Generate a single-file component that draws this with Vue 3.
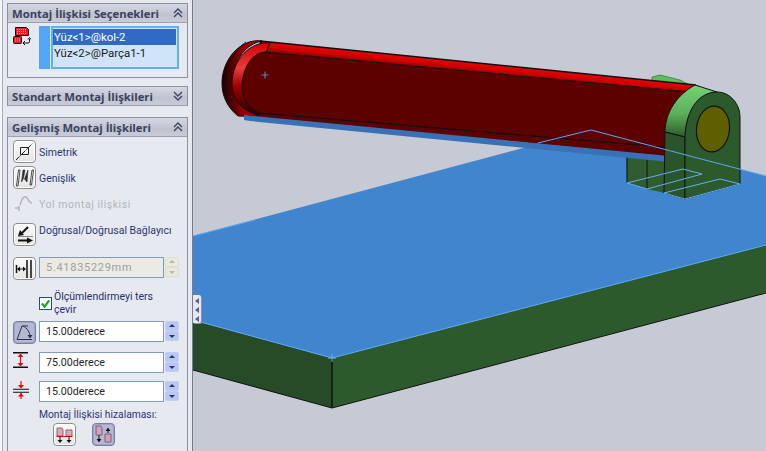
<template>
  <div class="app">
    <aside class="panel">
      <section class="group first">
        <header class="head">
          <span>Montaj İlişkisi Seçenekleri</span>
          <svg class="chev" viewBox="0 0 12 12"><path d="M2 6 6 2l4 4M2 10l4-4 4 4" /></svg>
        </header>
        <div class="sel-body">
          <svg class="sel-icon" viewBox="0 0 18 18">
            <path d="M2.500 .5h11l2 2v6h-13z" fill="#ee1c25" stroke="#111" />
            <path d="M4 2.500h10M4 4.500h10M4 6.500h10" stroke="#f8a0a0" stroke-dasharray="1 1" />
            <rect x=".5" y="9.500" width="8" height="7" rx="1" fill="#ee1c25" stroke="#111" />
            <path d="M2 12h5M2 14h5" stroke="#f8a0a0" stroke-dasharray="1 1" />
            <path d="M10 16h5a1.500 1.500 0 0 0 1.500-1.500V12M15 12.500l1.500-2 1.500 2M12 14l-2 2 2 2" fill="none" stroke="#111" />
          </svg>
          <div class="sel-swatch"></div>
          <div class="sel-list">
            <div class="sel-item on">Yüz&lt;1&gt;@kol-2</div>
            <div class="sel-item">Yüz&lt;2&gt;@Parça1-1</div>
          </div>
        </div>
      </section>

      <section class="group second">
        <header class="head">
          <span>Standart Montaj İlişkileri</span>
          <svg class="chev" viewBox="0 0 12 12"><path d="M2 2l4 4 4-4M2 6l4 4 4-4" /></svg>
        </header>
      </section>

      <section class="group third">
        <header class="head">
          <span>Gelişmiş Montaj İlişkileri</span>
          <svg class="chev" viewBox="0 0 12 12"><path d="M2 6 6 2l4 4M2 10l4-4 4 4" /></svg>
        </header>
        <div class="adv">
          <div class="tool">
            <button class="btn">
              <svg viewBox="0 0 21 21"><path d="M6.500 6.500h8v7h-8z" fill="none" stroke="#222" /><path d="M2 19 19 2" stroke="#222" stroke-dasharray="5 1 1 1" /></svg>
            </button>
            <span class="label">Simetrik</span>
          </div>
          <div class="tool gap-after">
            <button class="btn">
              <svg viewBox="0 0 21 21"><path d="M2.500 19 4.500 3h1.500L4 19zM16 18l2-15h1.500L17.500 18z" fill="#fff" stroke="#222" stroke-width=".8" /><path d="M7.500 15 9 3h2l-1.500 8zM13 15l1-12-3.500 9z" fill="#333" stroke="#222" stroke-width=".6" /></svg>
            </button>
            <span class="label">Genişlik</span>
          </div>
          <div class="tool path-row">
            <svg class="path-icon" viewBox="0 0 20 16"><path d="M1 12h4v-2M5 15v-5M6 9C8 2 10 0 12 1c2 1 3 6 6 6" fill="none" stroke="#b4b4b4" stroke-width="1.500" /></svg>
            <span class="label off">Yol montaj ilişkisi</span>
          </div>
          <div class="tool link-row">
            <button class="btn">
              <svg viewBox="0 0 21 21"><path d="M14 3 8 9" stroke="#111" stroke-width="2" /><path d="M4 12 6 6l4 5z" fill="#111" /><path d="M4 12.500h15" stroke="#888" /><path d="M4 16.500h11" stroke="#111" stroke-width="2" /><path d="M13 13.500l6 3-6 3z" fill="#111" /></svg>
            </button>
            <span class="label link-label">Doğrusal/Doğrusal Bağlayıcı</span>
          </div>

          <div class="field-row dist">
            <button class="btn">
              <svg viewBox="0 0 21 21"><path d="M2.500 7v8M13 2v18M17 2v18" stroke="#111" stroke-width="1.500" /><path d="M4 11h7" stroke="#111" /><path d="M3 11l3-2.500v5zM12 11l-3-2.500v5z" fill="#111" /></svg>
            </button>
            <div class="input disabled">5.41835229mm</div>
            <div class="spin disabled"><i class="up"></i><i class="down"></i></div>
          </div>

          <label class="check">
            <span class="box">
              <svg viewBox="0 0 12 12"><path d="M2 6l3 3.500L10 2.500" fill="none" stroke="#1ea32d" stroke-width="2.400" /></svg>
            </span>
            <span>Ölçümlendirmeyi ters çevir</span>
          </label>

          <div class="field-row angle">
            <button class="btn active">
              <svg viewBox="0 0 21 21"><path d="M3 17.500h15M3 17.500 8 4h6" stroke="#333" fill="none" /><path d="M9 4c4 2 7 6 7 11" stroke="#333" fill="none" /><path d="M13.500 13h5l-2.500 3.500z" fill="#333" /></svg>
            </button>
            <div class="input">15.00derece</div>
            <div class="spin"><i class="up"></i><i class="down"></i></div>
          </div>
          <div class="field-row">
            <svg class="red-icon" viewBox="0 0 16 16">
              <path d="M0 .75h15M0 15.250h15" stroke="#111" stroke-width="1.400" />
              <path d="M7.500 2v12" stroke="#f00015" stroke-width="1.200" />
              <path d="M4.500 5l3-3.500 3 3.500zM4.500 11l3 3.500 3-3.500z" fill="#f00015" />
            </svg>
            <div class="input">75.00derece</div>
            <div class="spin"><i class="up"></i><i class="down"></i></div>
          </div>
          <div class="field-row last">
            <svg class="red-icon tall" viewBox="0 0 16 18">
              <path d="M0 8.250h16M0 11.250h16" stroke="#111" stroke-width="1.200" />
              <path d="M8 0v7M8 12v6" stroke="#f00015" stroke-width="1.200" />
              <path d="M5 4l3 3.500L11 4zM5 15.500l3-3.500 3 3.500z" fill="#f00015" />
            </svg>
            <div class="input">15.00derece</div>
            <div class="spin"><i class="up"></i><i class="down"></i></div>
          </div>

          <div class="align-title">Montaj İlişkisi hizalaması:</div>
          <div class="align-row">
            <button class="btn">
              <svg viewBox="0 0 21 21"><path d="M3 4h5l1 2v6H3zM12 6h6v6h-6z" fill="#e0a8b8" stroke="#8a6878" /><path d="M2.500 12.500h16" stroke="#e00" /><path d="M6 12v6M15 12v6" stroke="#111" /><path d="M3.500 16h5L6 19zM12.500 16h5L15 19z" fill="#111" /></svg>
            </button>
            <button class="btn active">
              <svg viewBox="0 0 21 21"><path d="M3 2h5l1 2v7H3zM12 10h6v8h-6z" fill="#d8a0b8" stroke="#7a6080" /><path d="M6 11v7M15 9V4" stroke="#111" /><path d="M3.500 15h5L6 18zM12.500 7h5L15 4z" fill="#111" /></svg>
            </button>
          </div>
        </div>
      </section>
    </aside>

    <main class="viewport">
      <svg class="scene" viewBox="193 0 573 451">
        <defs>
          <linearGradient id="barTop" gradientUnits="userSpaceOnUse" x1="480" y1="63.500" x2="479" y2="73.500">
            <stop offset="0" stop-color="#ec0000" />
            <stop offset=".55" stop-color="#cc0000" />
            <stop offset="1" stop-color="#7c0000" />
          </linearGradient>
          <linearGradient id="capShade" x1="0" y1="0" x2="1" y2="0">
            <stop offset="0" stop-color="#1c0000" />
            <stop offset=".5" stop-color="#900000" />
            <stop offset="1" stop-color="#c80000" />
          </linearGradient>
          <linearGradient id="capLip" x1="0" y1="0" x2="0" y2="1">
            <stop offset="0" stop-color="#d80000" />
            <stop offset=".35" stop-color="#e83c3c" />
            <stop offset=".6" stop-color="#a00000" />
            <stop offset="1" stop-color="#200000" />
          </linearGradient>
          <linearGradient id="lugTop" x1="0" y1="0" x2="0" y2="1">
            <stop offset="0" stop-color="#74d274" />
            <stop offset=".55" stop-color="#5cb05c" />
            <stop offset="1" stop-color="#2b5c2b" />
          </linearGradient>
        </defs>

        <!-- plate -->
        <path d="M193 320 332 358v50L193 370z" fill="#264b26" />
        <path d="M332 358 766 245v48L332 408z" fill="#2d5a2d" />
        <path d="M193 370 332 408 766 293" fill="none" stroke="#111" />
        <path d="M332 358v50" stroke="#111" stroke-width="1.500" />
        <path d="M193 236 591 130 766 176v69L332 358 193 320z" fill="#4285cf" />

        <!-- lugs -->
        <path d="M652 77l8-2 20 5 10 5-38-4z" fill="#5cbf5c" stroke="#2d5a2d" stroke-width=".6" />
        <path d="M626 150h39v43l-18-4-20-6z" fill="#305c30" />
        <path d="M647 158v31M627 150v33" stroke="#111" />

        <!-- red bar -->
        <path d="M260 41 700 86 668 156 238 116z" fill="#5c0000" />
        <path d="M262 41 696 85 683 92 265 52z" fill="url(#barTop)" />
        <path d="M260 41 696 85" fill="none" stroke="#111" stroke-width="1.300" />
        <path d="M260 113 665 147M244 118 668 156" fill="none" stroke="#111" />
        <path d="M262 41C240 38 222 60 222 83 222 97 228 108 238 116L258 116C240 100 234 88 234 76 234 60 246 44 262 41z" fill="url(#capShade)" stroke="#111" />
        <path d="M246 42C234 50 226 66 226 84 226 96 230 106 238 114" fill="none" stroke="#111" stroke-width=".8" />
        <path d="M270 43C250 41 232 60 232 84 232 98 240 110 258 115L262 113 266 52 270 43z" fill="url(#capLip)" stroke="#111" />
        <path d="M265 52 690 92 665 147 260 113C250 110 242 100 242 87 242 72 250 53 265 52z" fill="#5c0000" stroke="#111" />
        <path d="M261.500 75h7M265 71.500v7" stroke="#5a8fc0" />
        <path d="M244 115 680 157v6L250 121l-6-1z" fill="#3a70b5" />

        <!-- clevis -->
        <path d="M665 132C665 112 678 94 695 85L717 92C698 94 686 115 685 137z" fill="url(#lugTop)" stroke="#111" />
        <path d="M665 132l20 5v62l-21-6z" fill="#2a542a" stroke="#111" />
        <path d="M685 137C686 108 700 92 717 92 730 92 740 104 740 117V184L685 199z" fill="#2d5a2d" stroke="#111" />
        <ellipse cx="713" cy="129" rx="16.500" ry="23" transform="rotate(6 713 129)" fill="#5f5f00" stroke="#111" stroke-width="1.200" />

        <!-- plate edges seen through the model -->
        <path d="M193 236 255 220M538 143 591 130 766 176M193 320 332 358 766 245" fill="none" stroke="#5aa8f0" />
        <path d="M627 183 683 169 702 174 647 189zM664 193 720 179 740 184 685 199z" fill="none" stroke="#62aef0" />
        <path d="M332 354v8M328 358h8" stroke="#6ab4f4" />
      </svg>
      <div class="grip"><i></i><i></i><i></i></div>
    </main>
  </div>
</template>

<script setup>
</script>

<style>
html,
body {
  margin: 0;
  overflow: hidden;
}
</style>

<style scoped>
.app {
  display: flex;
  width: 766px;
  height: 451px;
  overflow: hidden;
  font-family: Roboto, "Liberation Sans", sans-serif;
  font-size: 10.5px;
  color: #2b3670;
  background: #c6cad4;
}

.panel {
  box-sizing: border-box;
  width: 193px;
  height: 451px;
  flex: none;
  padding: 3px 4px 0 7px;
  background: #e7e9f1;
  border-right: 1px solid #777b8e;
  box-shadow: inset 2px 0 0 #f4f5f8, inset 3px 0 0 #a8abba;
}

.group {
  box-sizing: border-box;
  width: 181px;
  border: 1px solid #8c90a2;
  border-top: 0;
}

.first {
  height: 75px;
}

.second {
  margin-top: 8px;
  border-bottom: 0;
}

.third {
  margin-top: 11px;
  height: 340px;
  border-bottom: 0;
}

.head {
  box-sizing: border-box;
  height: 20px;
  display: flex;
  align-items: center;
  justify-content: space-between;
  padding: 0 3px 0 4px;
  background: linear-gradient(#d5d8e2, #bfc3cf 60%, #c9ccd7);
  border-top: 1px solid #8c90a2;
  border-bottom: 1px solid #9da1b1;
  font-family: "Open Sans", sans-serif;
  font-weight: 700;
  font-size: 11.3px;
  color: #3b4260;
}

.chev {
  width: 12px;
  height: 12px;
  fill: none;
  stroke: #3b4260;
  stroke-width: 1.300;
}

.sel-body {
  display: flex;
  padding: 3px 0 0 5px;
}

.sel-icon {
  width: 18px;
  height: 18px;
  flex: none;
  margin-top: 1px;
}

.sel-swatch {
  width: 11px;
  height: 43px;
  margin: 0 1px 0 8px;
  background: #52a5f8;
  flex: none;
}

.sel-list {
  box-sizing: border-box;
  width: 128px;
  height: 43px;
  padding: 1px 1px 0 0;
  background: #cfe4f8;
  border: 2px solid #60b0ea;
  color: #1a1a1a;
  font-size: 11.4px;
}

.sel-item {
  height: 16px;
  line-height: 16px;
  padding-left: 1px;
}

.sel-item.on {
  background: #316ac5;
  color: #fff;
}

.adv {
  padding: 3px 0 0 5px;
}

.tool {
  height: 23px;
  display: flex;
  align-items: center;
  gap: 3px;
  margin-bottom: 3px;
}

.label {
  margin-top: 1px;
}

.gap-after {
  margin-bottom: 4px;
}

.path-row {
  height: 21px;
  margin-bottom: 9px;
}

.path-icon {
  width: 20px;
  height: 16px;
  margin: 0 2px 0 1px;
  flex: none;
}

.off {
  color: #b5b5b5;
  letter-spacing: 0.55px;
}

.link-row {
  height: 24px;
  margin-bottom: 10px;
  align-items: flex-start;
}

.link-label {
  white-space: nowrap;
}

.btn {
  box-sizing: border-box;
  width: 23px;
  height: 23px;
  flex: none;
  padding: 0;
  border: 1px solid #8e8e8e;
  border-radius: 4px;
  background: linear-gradient(#fafafa, #e4e4e6);
  box-shadow: inset 0 0 0 1px #fff;
  display: flex;
  align-items: center;
  justify-content: center;
}

.btn svg {
  width: 21px;
  height: 21px;
  display: block;
}

.btn.active {
  background: #b4b8d4;
  border-color: #7e8098;
  box-shadow: inset 0 0 0 1px #9fa4c4;
}

.field-row {
  display: flex;
  align-items: flex-start;
  margin-bottom: 8px;
  height: 21px;
}

.field-row .btn {
  margin-right: 3px;
}

.dist {
  height: 23px;
  margin-bottom: 10px;
}

.angle {
  height: 23px;
}

.last {
  margin-bottom: 6px;
}

.input {
  box-sizing: border-box;
  width: 125px;
  height: 21px;
  flex: none;
  line-height: 19px;
  padding-left: 6px;
  background: #fff;
  border: 1px solid #7f9db9;
  color: #1f1f1f;
  font-size: 10.7px;
}

.input.disabled {
  background: #ebebe4;
  color: #a0a0a0;
  font-size: 11px;
  letter-spacing: 0.7px;
}

.spin {
  width: 14px;
  margin-left: 1px;
  flex: none;
}

.spin i {
  display: block;
  box-sizing: border-box;
  height: 10px;
  border: 1px solid #c2cdf0;
  border-radius: 2px;
  background: #b8c8f2;
  position: relative;
}

.spin i::after {
  content: "";
  position: absolute;
  left: 3px;
  border-left: 3px solid transparent;
  border-right: 3px solid transparent;
}

.spin .up::after {
  top: 2px;
  border-bottom: 3px solid #24346e;
}

.spin .down::after {
  top: 3px;
  border-top: 3px solid #24346e;
}

.spin.disabled i {
  background: #e9e9dc;
  border-color: #dfdfd0;
}

.spin.disabled .up::after {
  border-bottom-color: #b8b8b0;
}

.spin.disabled .down::after {
  border-top-color: #b8b8b0;
}

.check {
  display: flex;
  align-items: center;
  gap: 2px;
  margin: 0 0 5px 26px;
  width: 125px;
  line-height: 13px;
  color: #26306a;
}

.box {
  box-sizing: border-box;
  width: 13px;
  height: 13px;
  flex: none;
  background: #fff;
  border: 1px solid #1c5180;
}

.box svg {
  display: block;
  width: 11px;
  height: 11px;
}

.red-icon {
  width: 16px;
  height: 16px;
  flex: none;
  margin-right: 10px;
}

.red-icon.tall {
  height: 18px;
}

.align-title {
  height: 13px;
  line-height: 13px;
  margin: 0 0 2px 26px;
  white-space: nowrap;
  font-size: 10.3px;
}

.align-row {
  display: flex;
  gap: 16px;
  margin-left: 40px;
}

.viewport {
  position: relative;
  flex: 1;
  height: 451px;
}

.scene {
  display: block;
  width: 573px;
  height: 451px;
}

.grip {
  position: absolute;
  left: 0;
  top: 295px;
  box-sizing: border-box;
  width: 8px;
  height: 28px;
  padding: 3px 0 0 2px;
  background: #e4e6f0;
  border-radius: 0 2px 2px 0;
  box-shadow: 1px 1px 0 #8c90a2;
}

.grip i {
  display: block;
  width: 0;
  height: 0;
  margin-bottom: 3px;
  border-top: 3px solid transparent;
  border-bottom: 3px solid transparent;
  border-right: 4px solid #5a5aa8;
}
</style>
